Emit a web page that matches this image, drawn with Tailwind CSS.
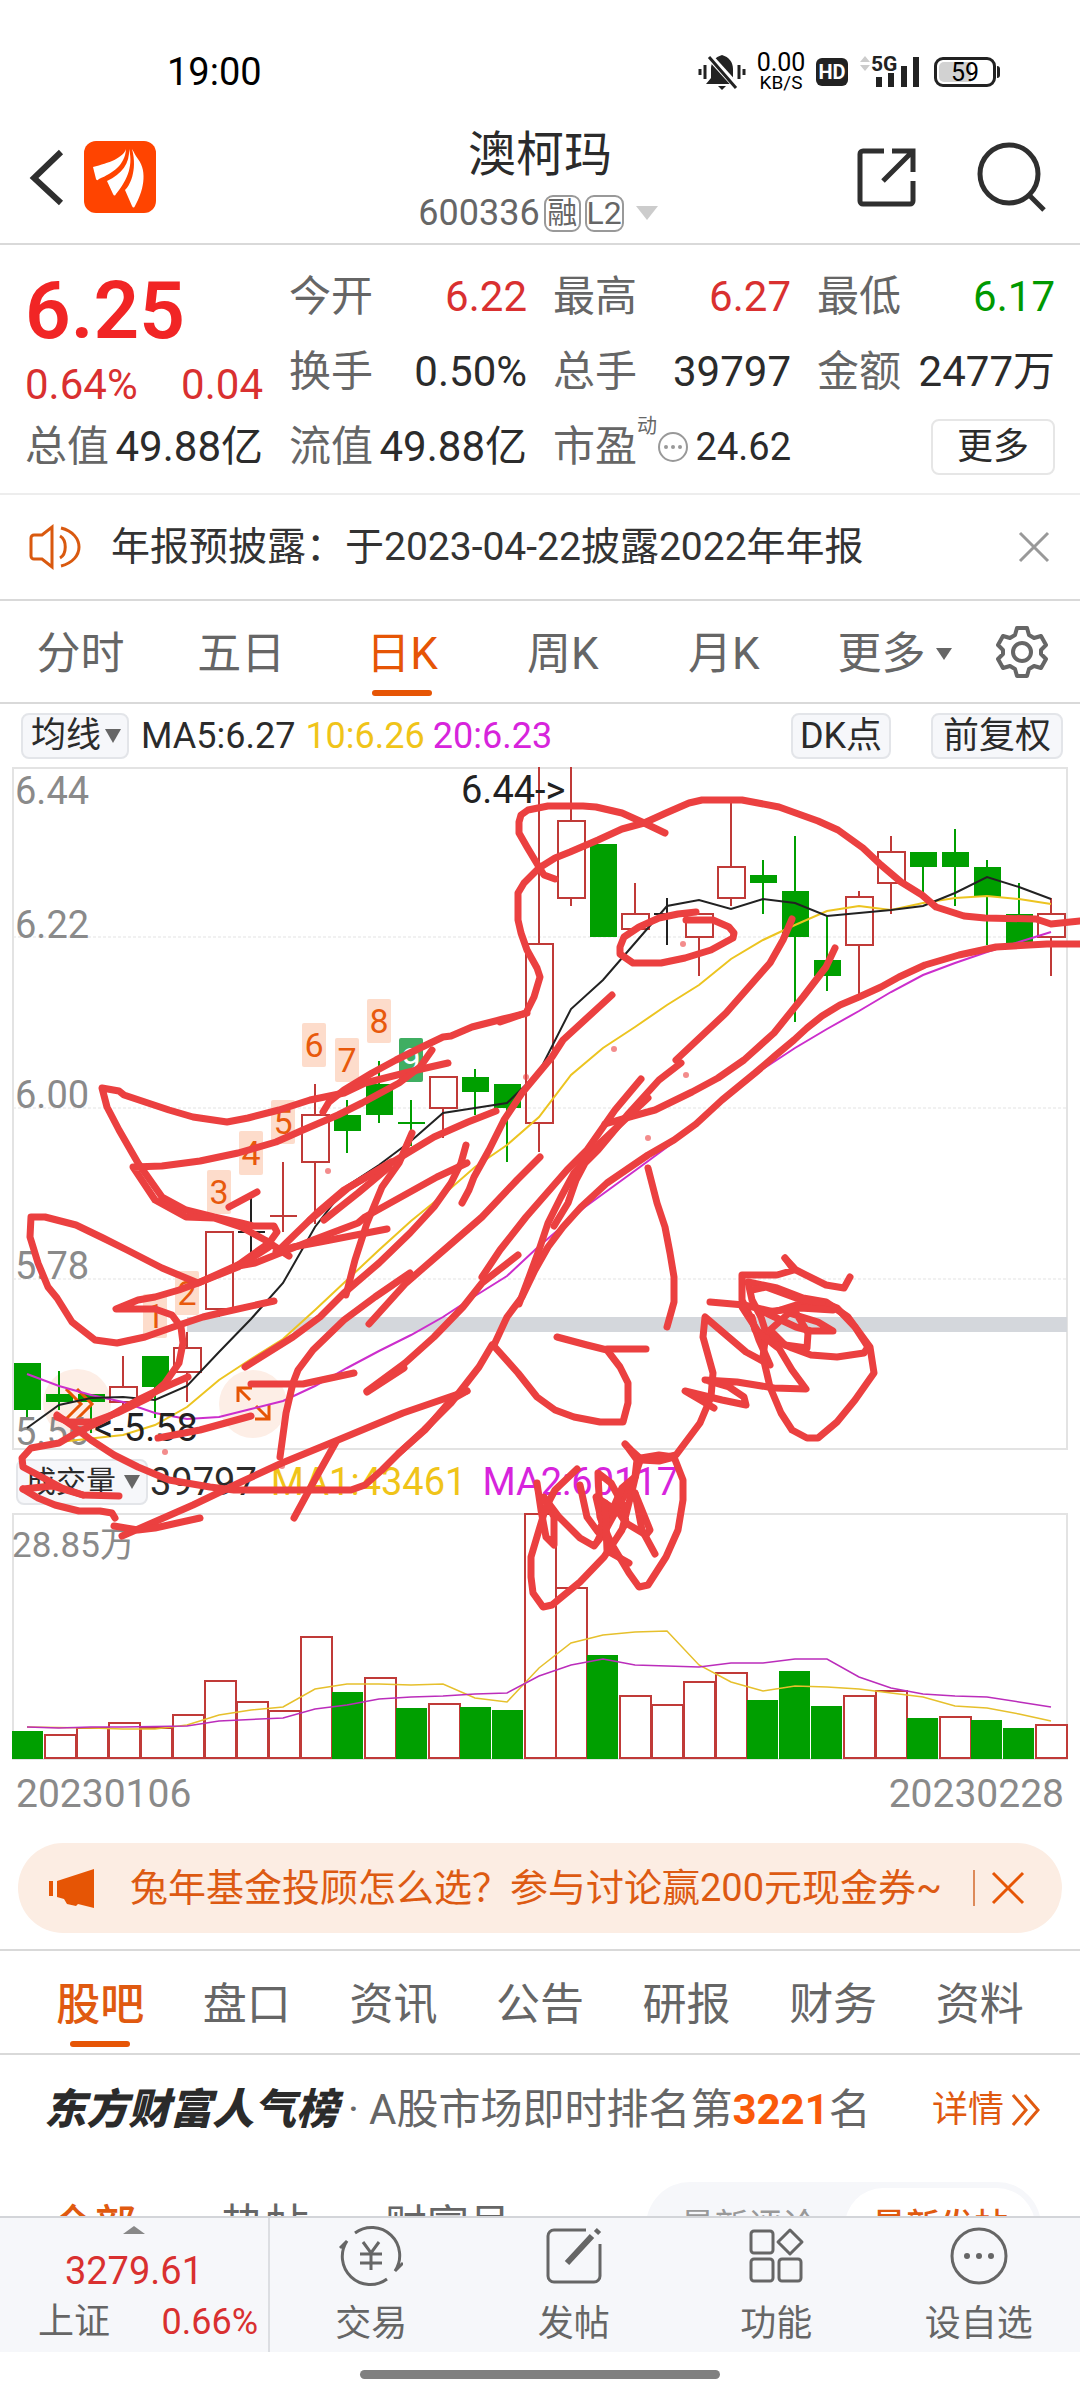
<!DOCTYPE html>
<html lang="zh-CN">
<head>
<meta charset="utf-8">
<meta name="viewport" content="width=device-width, initial-scale=1">
<title>澳柯玛 600336</title>
<script src="https://cdn.jsdelivr.net/npm/@tailwindcss/browser@4"></script>
</head>
<body class="bg-white">
<div class="flex h-screen flex-col overflow-hidden bg-white font-['Roboto','Noto_Sans_CJK_SC',sans-serif] text-[#2b2b2b]">

  <!-- status bar -->
  <div class="flex h-[116px] shrink-0 items-center justify-between pr-[84px] pl-[167px] pt-7 text-black">
    <span class="text-[38px] leading-[44px]">19:00</span>
    <div class="flex items-center gap-2.5">
      <svg class="h-9 w-12" viewBox="698 54 48 36" aria-hidden="true">
        <path d="M722 55c-7 2-11 7-11 14v9l-5 6h32l-5-6v-9c0-7-4-12-11-14z" fill="#222"/><path d="M718 86h8l-4 4z" fill="#222"/>
        <path d="M708 55l30 33" stroke="#fff" stroke-width="7"/><path d="M709 57l27 31" stroke="#222" stroke-width="3"/>
        <path d="M700 69v6M705 65v14M739 65v14M744 69v6" stroke="#222" stroke-width="3"/>
      </svg>
      <div class="flex w-[50px] flex-col items-center">
        <span class="text-[25px] leading-[22px]">0.00</span>
        <span class="text-[19px] leading-[18px]">KB/S</span>
      </div>
      <span class="flex h-7 w-8 items-center justify-center rounded-md bg-[#222] text-xl leading-none font-bold text-white">HD</span>
      <svg class="h-9 w-[62px]" viewBox="857 54 62 36" aria-hidden="true">
        <path d="M859 62l5-6 5 6zM859 65l5 6 5-6z" fill="#ccc"/>
        <text x="870" y="71" font-size="21" font-weight="700" fill="#222">5G</text>
        <path d="M878 77v10M890 73v14M903 66v21M915 57v30" stroke="#222" stroke-width="6"/>
      </svg>
      <div class="relative ml-1 flex h-[30px] w-[62px] items-center justify-center rounded-[9px] border-[3px] border-[#222]">
        <span class="absolute inset-y-[2px] left-[2px] w-[32px] rounded-l-[5px] bg-[#d2d2d2]"></span>
        <span class="absolute -right-[7px] h-3 w-[3px] rounded-r bg-[#222]"></span>
        <span class="relative text-[25px] leading-none">59</span>
      </div>
    </div>
  </div>

  <!-- title bar -->
  <header class="relative flex h-[129px] shrink-0 items-center justify-between border-b-2 border-[#d9d9d9] pr-[30px] pb-1.5 pl-7">
    <div class="flex items-center gap-5">
      <button aria-label="返回" class="h-[60px] w-9"><svg viewBox="0 0 36 60" class="h-full w-full" fill="none" stroke="#2f2f2f" stroke-width="6"><path d="M33 5L6 31l27 25"/></svg></button>
      <a href="#" aria-label="首页" class="block size-[72px] overflow-hidden rounded-xl bg-[#ff4400]">
        <svg viewBox="85 141 72 72" class="size-full" fill="#fff"><path d="M127 149c-3 9-17 14-33 18l3 12c1 2 2 1 3 0 14-6 26-14 27-30z"/><path d="M130 149c1 14-7 25-22 32l6 13c1 2 2 2 3 0 9-11 18-26 13-45z"/><path d="M133 149c6 22-3 38-7 41l7 16c1 2 2 2 3 0 8-14 13-34 3-47-3-4-4-7-6-10z"/></svg>
      </a>
    </div>
    <div class="pointer-events-none absolute inset-x-0 top-0 flex flex-col items-center pt-1">
      <h1 class="text-5xl leading-[70px]">澳柯玛</h1>
      <div class="flex items-center gap-1.5 pr-1 text-[36px] leading-[46px] text-[#666]">
        <span>600336</span>
        <span class="-mx-0.5 flex h-[37px] w-[37px] items-center justify-center rounded-[9px] border-2 border-[#999] text-[30px] leading-none">融</span>
        <span class="flex h-[37px] w-[39px] items-center justify-center rounded-[9px] border-2 border-[#999] text-[32px] leading-none">L2</span>
        <svg class="ml-1.5 h-3.5 w-[22px]" viewBox="0 0 22 14"><path d="M0 0h22L11 14z" fill="#ccc"/></svg>
      </div>
    </div>
    <div class="flex items-center gap-[54px]">
      <button aria-label="分享"><svg class="size-[68px]" viewBox="852 143 68 68" fill="none" stroke="#2f2f2f" stroke-width="5"><path d="M884 151h-21a3 3 0 0 0-3 3v47a3 3 0 0 0 3 3h47a3 3 0 0 0 3-3v-20M892 151h21v21M913 151l-30 30"/></svg></button>
      <button aria-label="搜索"><svg class="size-[76px]" viewBox="975 139 76 76" fill="none" stroke="#2f2f2f" stroke-width="5"><circle cx="1010" cy="174" r="29"/><path d="M1030 195l15 15"/></svg></button>
    </div>
  </header>

  <main class="min-h-0 flex-1 overflow-hidden">
    <!-- quote -->
    <section class="grid h-[250px] grid-cols-4 grid-rows-3 gap-x-[26px] border-b-2 border-[#ededed] px-[25px] pt-3.5 pb-2 text-[42px] leading-none">
      <div class="row-span-2 flex flex-col justify-between pt-2 pb-1 text-[#d93030]">
        <strong class="text-[80px] leading-[88px] font-semibold text-[#f12525]">6.25</strong>
        <div class="flex justify-between"><span>0.64%</span><span>0.04</span></div>
      </div>
      <div class="flex items-center justify-between"><span class="text-[#666]">今开</span><span class="text-[#d93030]">6.22</span></div>
      <div class="flex items-center justify-between"><span class="text-[#666]">最高</span><span class="text-[#d93030]">6.27</span></div>
      <div class="flex items-center justify-between"><span class="text-[#666]">最低</span><span class="text-[#009900]">6.17</span></div>
      <div class="flex items-center justify-between"><span class="text-[#666]">换手</span><span>0.50%</span></div>
      <div class="flex items-center justify-between"><span class="text-[#666]">总手</span><span>39797</span></div>
      <div class="flex items-center justify-between whitespace-nowrap"><span class="text-[#666]">金额</span><span>2477万</span></div>
      <div class="flex items-center justify-between whitespace-nowrap"><span class="text-[#666]">总值</span><span>49.88亿</span></div>
      <div class="flex items-center justify-between whitespace-nowrap"><span class="text-[#666]">流值</span><span>49.88亿</span></div>
      <div class="flex items-center whitespace-nowrap">
        <span class="text-[#666]">市盈</span><sup class="top-0 self-start text-xl leading-8 text-[#666]">动</sup>
        <svg class="size-8" viewBox="0 0 32 32"><circle cx="16" cy="16" r="14" fill="none" stroke="#999" stroke-width="2"/><g fill="#999"><circle cx="9" cy="16" r="2"/><circle cx="16" cy="16" r="2"/><circle cx="23" cy="16" r="2"/></g></svg>
        <span class="ml-auto text-[38px]">24.62</span>
      </div>
      <div class="flex items-center justify-end"><button class="h-14 w-[124px] rounded-lg border-2 border-[#e6e6e6] text-[36px] leading-none">更多</button></div>
    </section>

    <!-- notice -->
    <section class="flex h-[106px] items-center border-b-2 border-[#d9d9d9] pr-[30px] pl-[29px]">
      <svg class="h-12 w-[52px]" viewBox="29 523 52 48" fill="none" stroke="#d9590f" stroke-width="3"><path d="M52 527v40l-10-8h-8a3 3 0 0 1-3-3v-18a3 3 0 0 1 3-3h8zM60 536c7 4 7 18 0 22M61 528c24 6 24 32 0 38"/></svg>
      <p class="ml-[30px] flex-1 text-[39px] leading-none whitespace-nowrap text-[#333]">年报预披露：于2023-04-22披露2022年年报</p>
      <button aria-label="关闭"><svg class="size-8" viewBox="0 0 32 32" stroke="#999" stroke-width="3"><path d="M2 2l28 28M30 2L2 30"/></svg></button>
    </section>

    <!-- period tabs -->
    <nav class="grid h-[103px] grid-cols-[repeat(6,minmax(0,1fr))_115px] border-b-2 border-[#d9d9d9] text-[44px] leading-none text-[#666]">
      <a href="#" class="flex items-center justify-center pt-1">分时</a>
      <a href="#" class="flex items-center justify-center pt-1">五日</a>
      <a href="#" class="relative flex items-center justify-center pt-1 text-[#e65505]">日K<span class="absolute bottom-1.5 h-1.5 w-[60px] rounded-full bg-[#e65505]"></span></a>
      <a href="#" class="flex items-center justify-center pt-1">周K</a>
      <a href="#" class="flex items-center justify-center pt-1">月K</a>
      <button class="flex items-center justify-center gap-2.5 pt-1 pl-5">更多<svg class="h-3 w-4" viewBox="0 0 16 12"><path d="M0 0h16L8 12z" fill="#666"/></svg></button>
      <button aria-label="设置" class="flex items-center justify-center">
        <svg class="size-[54px]" viewBox="0 0 54 54" fill="none" stroke="#666" stroke-width="4" stroke-linejoin="round"><circle cx="27" cy="27" r="9"/><path d="M22 3h10l2 7 5 3 7-2 5 9-5 5v4l5 5-5 9-7-2-5 3-2 7H22l-2-7-5-3-7 2-5-9 5-5v-4l-5-5 5-9 7 2 5-3z"/></svg>
      </button>
    </nav>

    <!-- chart -->
    <section class="relative">
      <div class="flex h-[63px] items-center pr-[17px] pl-[21px] text-[36px] leading-none">
        <label class="relative"><span class="sr-only">指标</span>
          <select class="block h-[46px] w-[108px] appearance-none rounded-lg border-2 border-[#e3e5e9] bg-[#f6f7fa] pl-2 text-[35px] leading-[42px]"><option>均线</option></select>
          <svg class="absolute top-4 right-2 h-3.5 w-4" viewBox="0 0 16 14"><path d="M0 0h16L8 14z" fill="#666"/></svg>
        </label>
        <span class="ml-3">MA5:6.27</span><span class="ml-2.5 text-[#f0c419]">10:6.26</span><span class="ml-2 text-[#d724dc]">20:6.23</span>
        <button class="ml-auto h-[46px] w-[100px] rounded-lg border-2 border-[#e3e5e9] bg-[#f6f7fa]">DK点</button>
        <button class="ml-10 h-[46px] w-[132px] rounded-lg border-2 border-[#e3e5e9] bg-[#f6f7fa]">前复权</button>
      </div>

      <svg class="block w-full" viewBox="0 767 1080 683" font-size="38">
        <g fill="none" stroke="#e3e3e3" stroke-width="2"><rect x="13" y="768" width="1054" height="681"/><path d="M13 937H1067M13 1108H1067M13 1279H1067" stroke-width="1" stroke-dasharray="3 2"/></g>
        <rect x="187" y="1317" width="880" height="15" fill="#d4d7dc"/>
        <circle cx="77" cy="1403" r="34" fill="#fdeee6"/><circle cx="253" cy="1404" r="34" fill="#fdeee6"/>
        <g id="tags" font-size="34" text-anchor="middle"></g>
        <g id="candles" stroke-width="2"></g>
        <g fill="none" stroke="#e65505" stroke-width="3"><path d="M66 1389l15 15-15 15M77 1389l15 15-15 15M250 1400l-12-12M238 1402v-14h14M256 1406l13 13M269 1405v14h-14"/></g>
        <g fill="#8a8a8a"><text x="15" y="804">6.44</text><text x="15" y="938">6.22</text><text x="15" y="1108">6.00</text><text x="15" y="1279">5.78</text><text x="15" y="1445">5.56</text></g>
        <g fill="none" stroke-width="2">
          <polyline stroke="#cc2ecc" points="27,1374 59,1386 91,1395 123,1402 155,1413 187,1419 219,1417 251,1409 283,1401 315,1386 347,1368 379,1351 411,1335 443,1317 475,1296 507,1276 537,1248 585,1207 640,1167 674,1142 731,1095 763,1069 795,1048 827,1029 859,1011 891,992 923,975 955,963 987,952 1019,942 1051,932"/>
          <polyline stroke="#ecc420" points="27,1449 59,1442 123,1435 155,1425 187,1407 219,1380 251,1359 283,1339 315,1310 347,1280 379,1250 411,1221 443,1195 475,1167 507,1145 539,1117 571,1075 603,1048 635,1027 667,1005 699,985 731,959 763,940 795,925 827,911 859,906 891,910 923,903 955,898 987,896 1019,899 1051,904"/>
          <polyline stroke="#222" points="27,1428 59,1405 91,1398 123,1397 155,1400 187,1386 219,1352 251,1319 283,1283 315,1227 347,1186 379,1165 411,1141 443,1113 475,1108 507,1103 539,1072 571,1009 603,980 635,943 667,906 699,900 731,909 763,899 795,903 827,916 859,913 891,910 923,906 955,893 987,877 1019,887 1051,899"/>
        </g>
        <g fill="#222"><text x="461" y="803">6.44-&gt;</text><text x="94" y="1441">&lt;-5.58</text></g>
      </svg>

      <div class="flex h-[63px] items-center pl-4 text-[38px] leading-none">
        <label class="relative"><span class="sr-only">副图指标</span>
          <select class="block h-[46px] w-[132px] appearance-none rounded-lg border-2 border-[#e3e5e9] bg-[#f6f7fa] pl-2 text-[30px] leading-[42px]"><option>成交量</option></select>
          <svg class="absolute top-4 right-2 h-3.5 w-4" viewBox="0 0 16 14"><path d="M0 0h16L8 14z" fill="#666"/></svg>
        </label>
        <span class="ml-0.5">39797</span><span class="ml-3.5 text-[#f0c419]">MA1:43461</span><span class="ml-4 text-[#d724dc]">MA2:60117</span>
      </div>

      <svg class="block w-full" viewBox="0 1513 1080 247">
        <rect x="13" y="1514" width="1054" height="245" fill="none" stroke="#e3e3e3" stroke-width="2"/>
        <text x="12" y="1557" font-size="35" fill="#8a8a8a">28.85万</text>
        <g id="volumes" stroke-width="2"></g>
        <g fill="none" stroke-width="1.5">
          <polyline stroke="#e6c02c" points="27,1727 91,1728 123,1729 155,1729 187,1725 219,1715 251,1710 283,1707 315,1689 347,1684 379,1684 411,1685 443,1684 475,1698 507,1702 539,1668 571,1643 603,1635 635,1632 667,1631 699,1665 731,1682 763,1691 795,1686 827,1687 859,1689 891,1693 923,1697 955,1706 987,1708 1019,1714 1051,1721"/>
          <polyline stroke="#bb2dbb" points="27,1727 59,1728 91,1727 123,1727 187,1726 219,1721 283,1718 315,1709 347,1705 379,1699 411,1697 443,1696 475,1694 507,1693 539,1676 571,1665 603,1659 635,1665 699,1667 731,1663 763,1663 795,1659 827,1659 859,1677 891,1688 923,1694 955,1696 987,1697 1019,1702 1051,1707"/>
        </g>
      </svg>

      <!-- hand-drawn marks -->
      <svg class="pointer-events-none absolute inset-0 h-full w-full" viewBox="0 704 1080 1056" preserveAspectRatio="none" fill="none" stroke="#eb4040" stroke-width="7" stroke-linejoin="round" stroke-linecap="round" aria-hidden="true">
        <g id="ink"></g>
      </svg>
    </section>

    <div class="flex h-[83px] justify-between px-4 pt-3.5 text-[39px] leading-[40px] text-[#8a8a8a]"><span>20230106</span><span>20230228</span></div>

    <!-- banner -->
    <aside class="mx-[18px] flex h-[90px] items-center rounded-[45px] bg-[#fcede3] pr-[37px] pl-[29px] text-[#dd5a12]">
      <svg class="h-10 w-12" viewBox="46 1867 48 40" fill="#e65505"><path d="M48 1880h4v15h-4zM56 1880l37-12v39l-16-4-2 2-9-2-3-5-7-2z"/></svg>
      <a href="#" class="ml-[35px] flex-1 text-[38px] leading-none whitespace-nowrap">兔年基金投顾怎么选？参与讨论赢200元现金券~</a>
      <span class="h-9 w-[2px] bg-[#dd8a5a]"></span>
      <button aria-label="关闭" class="ml-4"><svg class="size-[34px]" viewBox="0 0 34 34" stroke="#e65505" stroke-width="3"><path d="M2 2l30 30M32 2L2 32"/></svg></button>
    </aside>

    <!-- content tabs -->
    <nav class="mt-4 grid h-[106px] grid-cols-7 border-y-2 border-[#d9d9d9] px-[27px] text-[44px] leading-none text-[#666]">
      <a href="#" class="relative flex items-center justify-center pt-1.5 font-medium text-[#e05a10]">股吧<span class="absolute bottom-1.5 h-1.5 w-[60px] rounded-full bg-[#e65505]"></span></a>
      <a href="#" class="flex items-center justify-center pt-1.5">盘口</a>
      <a href="#" class="flex items-center justify-center pt-1.5">资讯</a>
      <a href="#" class="flex items-center justify-center pt-1.5">公告</a>
      <a href="#" class="flex items-center justify-center pt-1.5">研报</a>
      <a href="#" class="flex items-center justify-center pt-1.5">财务</a>
      <a href="#" class="flex items-center justify-center pt-1.5">资料</a>
    </nav>

    <div class="flex h-[110px] items-center pr-10 pl-11 text-[42px] leading-none whitespace-nowrap text-[#666]">
      <strong class="font-black text-[#2b2b2b] italic">东方财富人气榜</strong>
      <span class="mx-2.5">·</span>
      <span>A股市场即时排名第<b class="text-[#fa5a0a]">3221</b>名</span>
      <a href="#" class="ml-auto flex items-center gap-2 text-[36px] text-[#e05a10]">详情<svg class="h-8 w-7" viewBox="0 0 28 32" fill="none" stroke="#e05a10" stroke-width="3"><path d="M1 1l13 15L1 31M13 1l13 15-13 15"/></svg></a>
    </div>

    <div class="mt-4 flex h-[90px] items-center pr-[39px] pl-[52px] text-[42px] leading-none text-[#666]">
      <a href="#" class="font-medium text-[#e05a10]">全部</a>
      <a href="#" class="ml-[85px] text-[44px]">热帖</a>
      <a href="#" class="ml-[76px] text-[42px]">财富号</a>
      <div class="ml-auto flex h-[88px] w-[395px] rounded-full bg-[#f6f7fa] p-1.5 text-[34px]">
        <button class="flex-1 text-[#999]">最新评论</button>
        <button class="w-[190px] rounded-full bg-white font-medium text-[#e05a10]">最新发帖</button>
      </div>
    </div>
  </main>

  <!-- bottom bar -->
  <nav class="flex h-[136px] shrink-0 border-t-2 border-[#d3d5d9] bg-[#f6f7fa] text-[36px] leading-none text-[#666]">
    <a href="#" class="flex w-1/4 flex-col items-center border-r-2 border-[#dcdee2] pt-2 text-[#d93030]">
      <svg class="h-2 w-[22px]" viewBox="0 0 22 8"><path d="M0 8L11 0l11 8z" fill="#888"/></svg>
      <span class="mt-4 text-[38px] leading-[42px]">3279.61</span>
      <span class="mt-3 flex w-full justify-between pr-2.5 pl-[38px]"><span class="text-[#666]">上证</span><span>0.66%</span></span>
    </a>
    <a href="#" class="flex flex-1 flex-col items-center justify-between pt-1.5 pb-2.5">
      <svg class="size-16" viewBox="340 2224 64 64" fill="none" stroke="#666" stroke-width="3"><path d="M356 2233a28 28 0 0 1 40 38l8-8M388 2279a28 28 0 0 1-40-38l-7 7M364 2242l8 11 8-11M372 2253v17M361 2254h22M361 2263h22"/></svg>交易</a>
    <a href="#" class="flex flex-1 flex-col items-center justify-between pt-1.5 pb-2.5">
      <svg class="size-16" viewBox="542 2224 64 64" fill="none" stroke="#666" stroke-width="3"><path d="M586 2230h-32a6 6 0 0 0-6 6v40a6 6 0 0 0 6 6h40a6 6 0 0 0 6-6v-32"/><path d="M567 2263l25-27M596 2233l3-3" stroke-width="6"/></svg>发帖</a>
    <a href="#" class="flex flex-1 flex-col items-center justify-between pt-1.5 pb-2.5">
      <svg class="size-16" viewBox="744 2224 64 64" fill="none" stroke="#666" stroke-width="3"><rect x="751" y="2231" width="22" height="22" rx="3"/><rect x="751" y="2259" width="22" height="22" rx="3"/><rect x="779" y="2259" width="22" height="22" rx="3"/><path d="M790 2230l12 12-12 12-12-12z" stroke-linejoin="round"/></svg>功能</a>
    <a href="#" class="flex flex-1 flex-col items-center justify-between pt-1.5 pb-2.5">
      <svg class="size-16" viewBox="0 0 64 64"><circle cx="32" cy="32" r="27" fill="none" stroke="#666" stroke-width="3"/><g fill="#666"><circle cx="20" cy="32" r="3"/><circle cx="32" cy="32" r="3"/><circle cx="44" cy="32" r="3"/></g></svg>设自选</a>
  </nav>
  <div class="flex h-12 shrink-0 justify-center pt-[18px]"><span class="h-[9px] w-1/3 rounded-full bg-[#808080]"></span></div>
</div>

<script>
const GREEN = '#009f00', RED = '#c03a38', BLACK = '#222';
const color = { g: GREEN, r: RED, k: BLACK };
// [kind, wick top, body top, body bottom, wick bottom]
const candles = [
 ['g',1363,1363,1410,1418],['g',1371,1394,1402,1410],['g',1394,1394,1402,1433],['r',1356,1387,1402,1413],['g',1356,1356,1387,1418],
 ['r',1332,1348,1372,1402],['r',1232,1232,1309,1317],['k',1195,1232,1232,1263],['r',1162,1216,1216,1232],['r',1084,1115,1162,1224],
 ['g',1100,1115,1131,1153],['g',1061,1084,1115,1123],['g',1100,1123,1123,1146],['r',1077,1077,1108,1138],['g',1069,1077,1092,1115],
 ['g',1084,1084,1108,1162],['r',767,944,1123,1152],['r',767,821,898,906],['g',844,844,937,937],['r',883,914,929,929],
 ['k',898,914,914,945],['r',914,914,937,976],['r',800,867,898,906],['g',860,875,883,914],['g',836,891,937,1022],
 ['g',916,960,976,991],['r',891,897,945,997],['r',836,852,883,914],['g',852,852,867,897],['g',829,852,867,906],
 ['g',860,867,897,945],['g',883,914,943,943],['r',898,914,937,976]];
const volumes = [1731,1735,1728,1723,1728,1715,1681,1702,1711,1637,1692,1678,1708,1704,1707,1710,1514,1588,1655,1696,1705,1682,1673,1700,1671,1706,1696,1691,1718,1717,1720,1728,1725];
const volumeKinds = 'grrrrrrrrrgrgrggrrgrrrrgggrrgrggr';
document.getElementById('candles').innerHTML = candles.map(([k, t, a, b, l], i) => {
  const x = 27 + 32 * i, c = color[k];
  if (a === b) return `<path d="M${x} ${t}V${l}M${x - 13} ${a}H${x + 14}" stroke="${c}"/>`;
  return `<path d="M${x} ${t}V${a}M${x} ${b}V${l}" stroke="${c}"/>` + (k === 'g'
    ? `<rect x="${x - 13}" y="${a}" width="27" height="${b - a}" fill="${c}"/>`
    : `<rect x="${x - 13}" y="${a}" width="27" height="${b - a}" fill="none" stroke="${c}"/>`);
}).join('');
document.getElementById('volumes').innerHTML = volumes.map((y, i) => {
  const x = 12 + 32 * i - (i > 16 ? 1 : 0);
  return volumeKinds[i] === 'g'
    ? `<rect x="${x}" y="${y}" width="31" height="${1759 - y}" fill="${GREEN}"/>`
    : `<rect x="${x + 1}" y="${y}" width="31" height="${1758 - y}" fill="none" stroke="${RED}"/>`;
}).join('');
const tags = [[155,1294],[187,1271],[219,1170],[251,1131],[283,1100],[314,1023],[347,1038],[379,999],[411,1038]];
document.getElementById('tags').innerHTML = tags.map(([x, y], i) =>
  `<rect x="${x - 12}" y="${y}" width="24" height="44" rx="2" fill="${i === 8 ? '#3fae62' : '#fddccb'}"/><text x="${x}" y="${y + 34}" fill="${i === 8 ? '#fff' : '#e8590c'}">${i + 1}</text>`).join('');

// freehand strokes: origin x, origin y, x scale, then point lists
const ink = [
 [0, 750, .34439, [
  '938,1085 955,1055 1000,1020 1080,970 1150,930 1220,895 1285,862 1310,858 1370,830 1460,808 1530,788',
  '1300,940 1210,960 1060,1000 1000,1030 900,1050 810,1080 720,1105 660,1115 560,1100 490,1080 360,1035 345,1022 295,1015 310,1070 345,1140 400,1240 470,1340 540,1380 620,1400 700,1420 735,1428 795,1428 803,1445 780,1480 690,1545',
  '1255,900 1220,950 1160,1000 1050,1060 980,1095 880,1140 800,1175 690,1210 580,1233 470,1247 385,1252 450,1350 540,1400 620,1405 700,1430 770,1470 840,1518']],
 [500, 750, .3699, [
  '0,815 70,790 92,740 107,680 100,655 72,600 58,550 48,510 48,430 65,400 105,355 150,325 190,305 265,270 330,238 390,218 450,190 510,160 545,150 655,150 755,170 860,213 915,240 980,295 1030,345 1085,395 1140,435 1180,470 1255,498 1310,503 1450,507 1490,522 1568,512',
  '447,250 385,215 330,190 260,172 225,168 130,168 75,180 58,195 52,215 52,250 72,290 105,350 120,375 150,388',
  '530,486 480,492 430,505 375,530 335,560 324,590 324,612 360,638 435,638 500,625 570,600 630,565 632,550 620,530 575,510 503,510',
  '1568,583 1480,583 1340,590 1240,615 1150,645 1080,680 1030,710 970,740 920,765 870,798 830,835 795,870 745,915 690,970 600,1050 530,1122 470,1170 400,1215 340,1260 290,1300 220,1370 170,1430 130,1490 95,1560 60,1640 20,1700 -15,1785',
  '303,735 170,870 140,920 60,1030 10,1110 -30,1200 -70,1280 -85,1320 -104,1360',
  '790,508 765,570 730,640 690,690 610,790 475,930',
  '905,595 880,650 820,740 740,850 660,930 590,985 520,1025 420,1080 360,1098 285,1122',
  '490,938 430,990 350,1090 265,1200 230,1240 205,1290 185,1360 145,1428',
  '380,988 310,1080 235,1200 180,1260 70,1400 0,1500 -50,1580',
  '400,1045 270,1180 200,1270 165,1340 130,1420 105,1500 75,1590 52,1662']],
 [0, 1100, .34439, [
  '1430,735 1390,800 1310,910 1230,990 1160,1060 1110,1110 1060,1155 1020,1170 680,1170 610,1160 490,1140 400,1100 330,1065 265,1020 215,980 165,945',
  '1568,170 1500,240 1400,350 1290,450 1180,550 1072,672',
  '1190,518 1090,590 1000,660 910,750 865,810 850,850 830,940 812,1070',
  '1503,465 1400,550 1345,620 1260,710 1175,790 1065,873', '1172,805 1065,875',
  '1195,100 1160,190 1110,260 1065,370 1030,480 1005,585',
  '1352,135 1340,190 1310,250 1260,320 1190,400 1100,490 1000,580 930,650 850,710 710,800',
  '1440,33 1360,65 1260,110 1150,180 1000,270 920,340 820,440', '1135,185 1010,265 900,360', '1130,200 1040,280 940,360',
  '1355,190 1270,230 1060,350 1040,370 910,420 740,490 690,498', '1123,387 930,425 850,440 800,455', '745,275 665,320',
  '690,495 575,550 470,505 370,450 300,415 220,375 130,352 90,352 88,410 110,490 140,560 165,595 210,665 275,720 340,730 420,712 520,675 590,650 640,640 795,602',
  '780,440 690,500 575,550 520,570 450,590 400,600 337,628 450,628 500,645 525,680 532,730 520,790 480,850 430,895 340,940 270,965 200,965 165,950',
  '545,830 480,860 400,900 300,960 220,1000 170,1030 90,1045 65,1075 68,1100 110,1125 180,1165 240,1185 345,1188',
  '68,1168 110,1195 160,1215 230,1232 290,1232 325,1240 335,1255', '68,1168 150,1158 240,1185',
  '730,948 580,990 460,1015', '1028,820 880,853 728,852',
  '1355,872 1170,940 980,1020 820,1090 700,1145 560,1215 440,1270 355,1308', '580,1255 450,1285 400,1290 330,1278',
  '1310,900 1235,990 1160,1060', '1310,900 1355,872', '975,1025 910,1150 855,1255']],
 [500, 1100, .3699, [
  '400,205 425,310 445,380 460,460 470,530 470,605 452,680',
  '-18,735 50,820 100,890 150,930 200,950 270,965 332,965 347,910 345,850 325,800 290,750 235,735 155,710', '290,748 395,748',
  '770,475 795,510 750,525 653,525 655,600 680,660 700,720 730,795 665,755 553,650 550,710 575,820 570,890 540,970 475,1065 440,1075 380,1078 355,1050 338,1032',
  '770,475 800,510 880,555 930,565 945,530',
  '568,605 660,615 740,635 800,615 870,605 910,625 960,680 995,740 985,760 910,770 840,765 790,745 730,715 690,690 680,650',
  '670,545 680,600 705,650 720,700 710,770 730,860 760,940 790,990 830,1015 860,1015 910,965 960,900 1010,820 1000,740 940,650 880,605 820,595 750,565 670,545',
  '680,570 720,560 800,595 870,610', '655,620 700,700 750,740',
  '720,640 800,680 840,692 900,692 860,665 780,640 730,690 770,735 830,745 832,700 800,640', '720,635 810,625 900,630',
  '750,735 790,810 828,866 740,865 640,845 553,840 620,860 660,890 665,915 600,900 500,873 578,923']],
 [500, 1440, .3699, [
  '100,130 110,210 125,290 145,315 145,230 120,170 160,230 215,295 255,318 280,280 330,180 365,110 370,60 340,15',
  '207,88 150,150 125,200 105,270 85,350 83,410 90,460 115,500 140,495 215,425 280,350 330,270 360,140 370,90 380,55 430,45 470,50 495,120 495,180 480,270 450,350 400,435 375,440 350,400 300,310 270,230 265,100 300,130 335,200 340,250 300,320',
  '365,110 330,145 300,220 265,300', '380,60 430,62 470,50',
  '215,135 235,230 265,275 300,200 260,170 275,250 300,340 350,370', '285,190 290,330', '365,160 405,270 395,285 340,250 310,200', '365,160 385,270 420,342']]];
const dots = [[526,1077],[614,1049],[686,1075],[648,1138],[683,944],[328,1171],[165,1452],[282,1466]];
document.getElementById('ink').innerHTML = ink.map(([ox, oy, s, lines]) => lines.map(line =>
  `<polyline points="${line.split(' ').map(p => { const [x, y] = p.split(',').map(Number); return Math.round(ox + x * s) + ',' + Math.round(oy + y / 3); }).join(' ')}"/>`).join('')).join('')
  + dots.map(([x, y]) => `<circle cx="${x}" cy="${y}" r="3" fill="#eb4040" stroke="none" opacity=".6"/>`).join('');
</script>
</body>
</html>
